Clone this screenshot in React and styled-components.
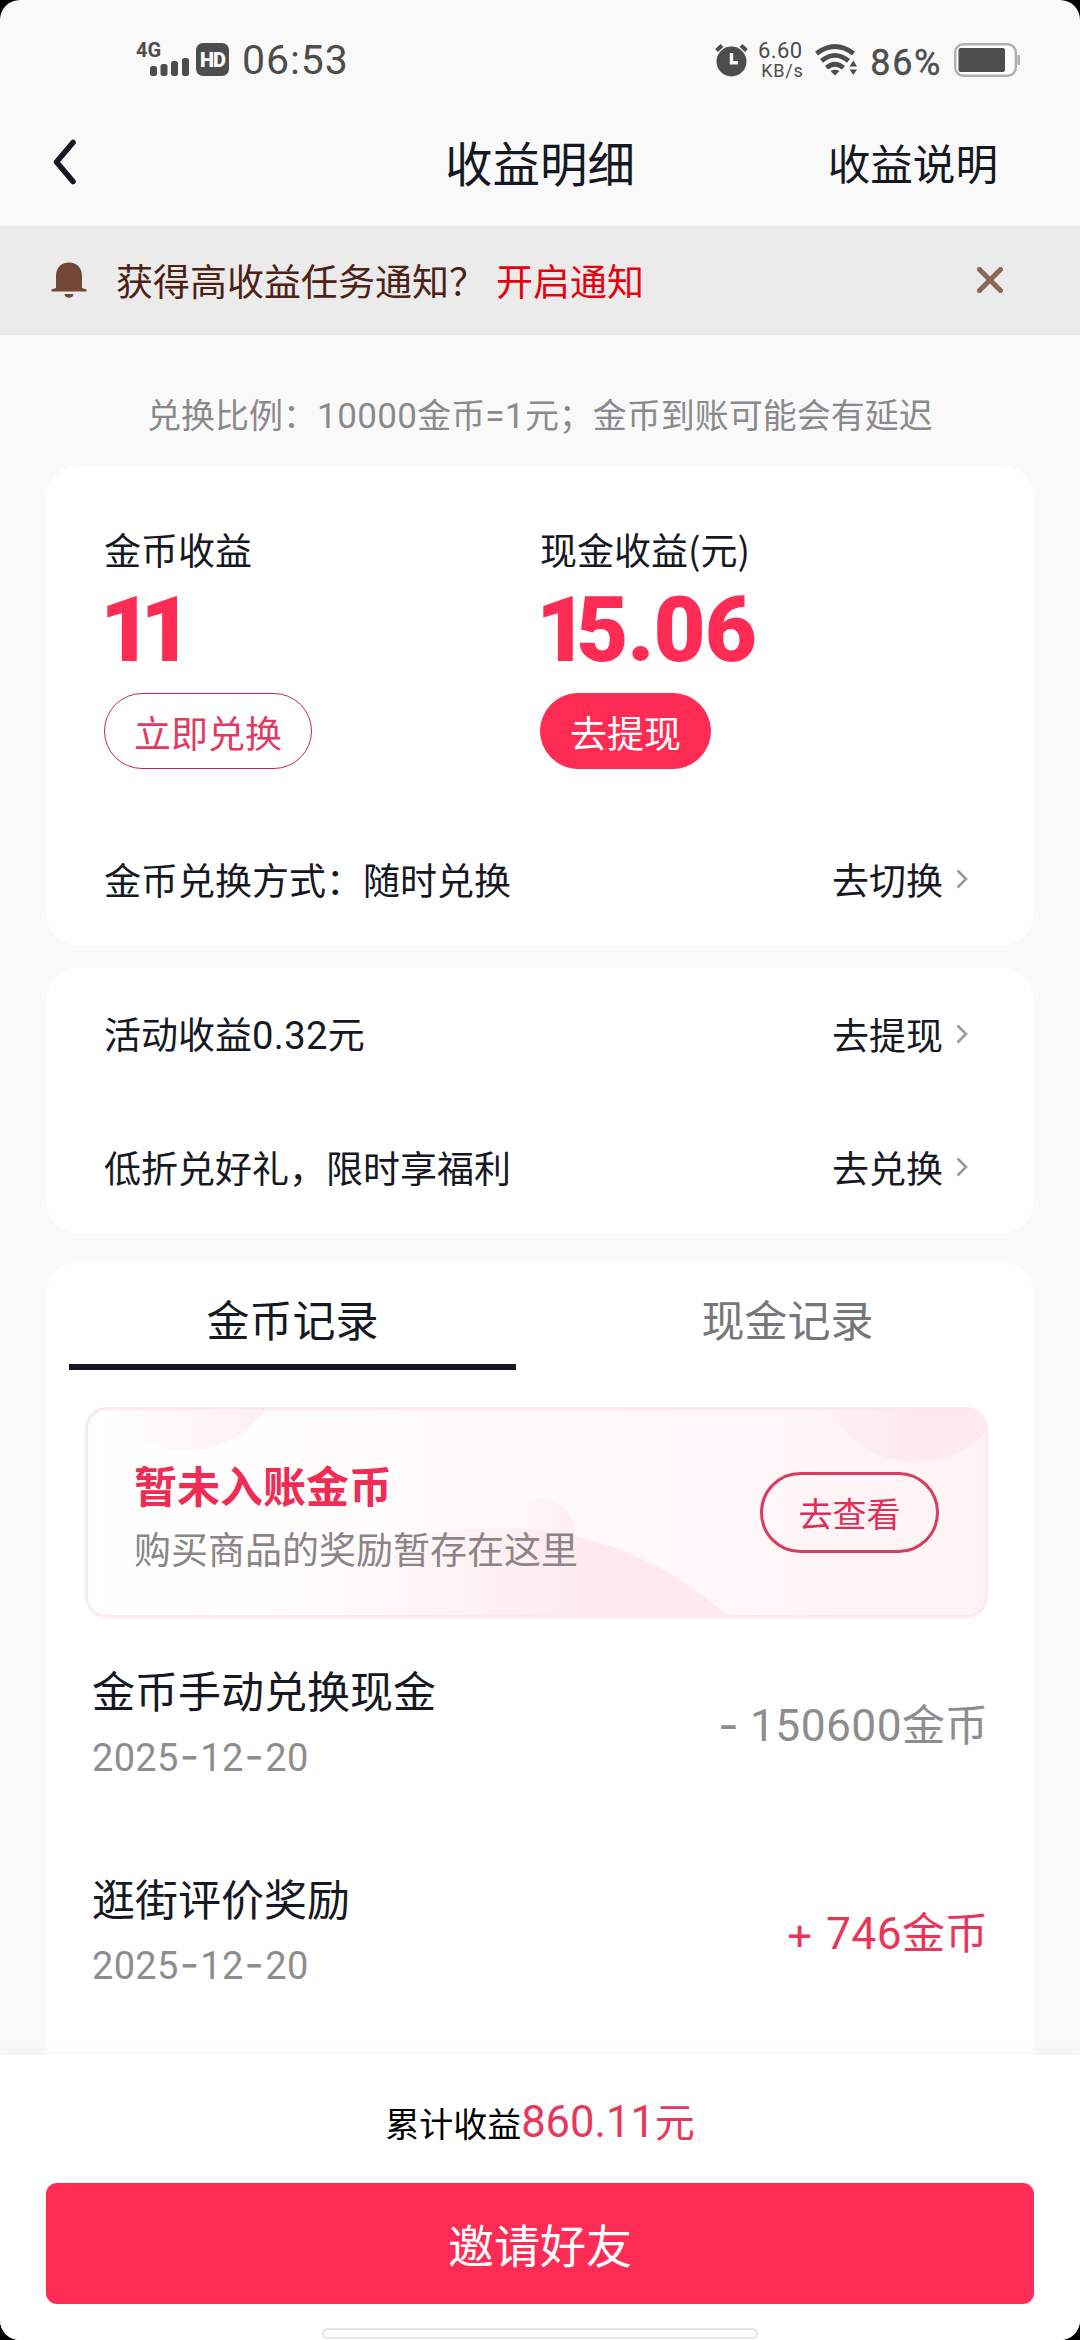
import React, { useState } from 'react';
import styled, { createGlobalStyle } from 'styled-components';

const records = [
    { id: 1, title: '金币手动兑换现金', date: '2025-12-20', sign: '-', amount: '150600' },
    { id: 2, title: '逛街评价奖励', date: '2025-12-20', sign: '+', amount: '746' },
]

const tabs = ['金币记录', '现金记录']

const StatusBar = () => {
    return (
        <StatusWrap>
            <StatusLeft>
                <Network>
                    <p>4G</p>
                    <svg width="39" height="18" viewBox="0 0 39 18" fill="#4d4d4d">
                        <rect x="0" y="8" width="7" height="10" rx="2.5" />
                        <rect x="10.5" y="6" width="7" height="12" rx="2.5" />
                        <rect x="21" y="3" width="7" height="15" rx="2.5" />
                        <rect x="32" y="0" width="7" height="18" rx="2.5" />
                    </svg>
                </Network>
                <HdBadge>HD</HdBadge>
                <Clock>06:53</Clock>
            </StatusLeft>
            <StatusRight>
                <svg width="33" height="34" viewBox="0 0 33 34">
                    <circle cx="16.5" cy="18.5" r="15" fill="#4d4d4d" />
                    <path d="M1.5 7.5 L7 2.5 M31.5 7.5 L26 2.5" stroke="#4d4d4d" strokeWidth="4" />
                    <path d="M16.5 10 V19.8 H23" fill="none" stroke="#f9f9f9" strokeWidth="3.4" />
                </svg>
                <Speed>
                    <b>6.60</b>
                    <span>KB/s</span>
                </Speed>
                <svg width="42" height="32" viewBox="0 0 42 32">
                    <g fill="none" stroke="#4d4d4d" strokeWidth="4.8">
                        <path d="M1.5 9.5 Q20 -4.5 38.5 9.5" />
                        <path d="M6.5 16.8 Q20 6 33.5 16.8" />
                        <path d="M11.5 23.8 Q20 16.5 28.5 23.8" />
                    </g>
                    <path d="M15.5 27 Q20 24.4 24.5 27 L20 31.5 Z" fill="#4d4d4d" />
                    <path d="M38.3 16.5 L42 22.5 H34.6 Z M38.3 31 L42 25.5 H34.6 Z" fill="#4d4d4d" />
                </svg>
                <Percent>86%</Percent>
                <svg width="66" height="34" viewBox="0 0 66 34">
                    <rect x="1.2" y="1.2" width="60.6" height="31.6" rx="8" fill="#fff" stroke="#b0b0b0" strokeWidth="2.4" />
                    <rect x="4.5" y="5" width="46.5" height="24" rx="2" fill="#4d4d4d" />
                    <rect x="63.4" y="12" width="2.6" height="10" rx="1" fill="#b0b0b0" />
                </svg>
            </StatusRight>
        </StatusWrap>
    )
}

const LinkRow = ({ label, action }) => {
    return (
        <LinkRowWrap>
            <p>{label}</p>
            <LinkBtn>
                {action}
                <svg width="12" height="20" viewBox="0 0 12 20">
                    <path d="M1.5 1.5 L10 10 L1.5 18.5" fill="none" stroke="#999" strokeWidth="2.6" />
                </svg>
            </LinkBtn>
        </LinkRowWrap>
    )
}

const PendingBanner = () => {
    return (
        <Banner>
            <BannerArt width="903" height="211" viewBox="0 0 903 211">
                <defs>
                    <linearGradient id="bannerLeft" x1="0" x2="1">
                        <stop offset="0.1" stopColor="#fdeef1" stopOpacity="0" />
                        <stop offset="1" stopColor="#fdeef1" />
                    </linearGradient>
                    <linearGradient id="bannerHill" x1="0" x2="1">
                        <stop offset="0.25" stopColor="#fee9ee" stopOpacity="0" />
                        <stop offset="0.65" stopColor="#fee9ee" />
                    </linearGradient>
                    <linearGradient id="bannerRight" x1="0" x2="1">
                        <stop offset="0.05" stopColor="#fee9ee" stopOpacity="0.4" />
                        <stop offset="0.5" stopColor="#fee9ee" />
                    </linearGradient>
                </defs>
                <circle cx="102" cy="-51" r="95" fill="url(#bannerLeft)" />
                <circle cx="455" cy="126" r="35" fill="url(#bannerLeft)" />
                <circle cx="415" cy="460" r="339" fill="url(#bannerHill)" />
                <circle cx="830" cy="-44" r="99" fill="url(#bannerRight)" />
            </BannerArt>
            <BannerText>
                <h3>暂未入账金币</h3>
                <p>购买商品的奖励暂存在这里</p>
            </BannerText>
            <BannerBtn>去查看</BannerBtn>
        </Banner>
    )
}

const RecordItem = ({ record }) => {
    const [year, month, day] = record.date.split('-')

    return (
        <RecordWrap>
            <div>
                <RecordTitle>{record.title}</RecordTitle>
                <RecordDate>{year}<Dash>-</Dash>{month}<Dash>-</Dash>{day}</RecordDate>
            </div>
            <RecordAmount $income={record.sign === '+'}>
                <Sign>{record.sign}</Sign><Num> {record.amount}</Num>金币
            </RecordAmount>
        </RecordWrap>
    )
}

const App = () => {
    const [active, setActive] = useState(0)

    return (
        <Screen>
            <GlobalStyle />
            <Page>
                <StatusBar />
                <NavBar>
                    <BackBtn>
                        <svg width="24" height="46" viewBox="0 0 24 46">
                            <path d="M21 3.5 L4.5 23 L21 42.5" fill="none" stroke="#161823" strokeWidth="5.6" strokeLinecap="round" strokeLinejoin="round" />
                        </svg>
                    </BackBtn>
                    <h1>收益明细</h1>
                    <NavLink>收益说明</NavLink>
                </NavBar>
                <Notice>
                    <svg width="36" height="36" viewBox="0 0 36 36" fill="#724735">
                        <path d="M5 26 V14 C5 5.5 10.5 0.5 18 0.5 C25.5 0.5 31 5.5 31 14 V26 L35.5 27.5 V29.5 H0.5 V27.5 Z" />
                        <path d="M13.5 32 H22.5 C22.5 37 13.5 37 13.5 32 Z" />
                    </svg>
                    <NoticeText>获得高收益任务通知？</NoticeText>
                    <NoticeLink>开启通知</NoticeLink>
                    <svg width="26" height="26" viewBox="0 0 26 26">
                        <path d="M2.5 2.5 L23.5 23.5 M23.5 2.5 L2.5 23.5" stroke="#8a6759" strokeWidth="5" strokeLinecap="round" />
                    </svg>
                </Notice>
                <Rate>
                    兑换比例：<Num>10000</Num>金币<Num>=1</Num>元；金币到账可能会有延迟
                </Rate>
                <Card>
                    <Balances>
                        <Balance>
                            <p>金币收益</p>
                            <h2><Tight>1</Tight>1</h2>
                            <PillBtn>立即兑换</PillBtn>
                        </Balance>
                        <Balance>
                            <p>现金收益(元)</p>
                            <h2><Tight>1</Tight>5.06</h2>
                            <PillBtn $filled>去提现</PillBtn>
                        </Balance>
                    </Balances>
                    <LinkRow label="金币兑换方式：随时兑换" action="去切换" />
                </Card>
                <Card $top={23}>
                    <LinkRow label={<>活动收益<Num>0.32</Num>元</>} action="去提现" />
                    <LinkRow label="低折兑好礼，限时享福利" action="去兑换" />
                </Card>
                <RecordCard $top={29}>
                    <TabList>
                        {tabs.map((tab, i) => (
                            <Tab key={tab} $active={active === i} onClick={() => setActive(i)}>{tab}</Tab>
                        ))}
                    </TabList>
                    <PendingBanner />
                    <ul>
                        {records.map((record) => (
                            <RecordItem key={record.id} record={record} />
                        ))}
                    </ul>
                </RecordCard>
                <Footer>
                    <Total>
                        累计收益<strong>860.11<i>元</i></strong>
                    </Total>
                    <InviteBtn>邀请好友</InviteBtn>
                    <HomeBar />
                </Footer>
            </Page>
        </Screen>
    )
}

const GlobalStyle = createGlobalStyle`
    *{
        box-sizing:border-box;
        margin:0;
        padding:0;
    }
    body{
        background:#000;
        color:#161823;
        font-family:'Noto Sans CJK SC', sans-serif;
        font-size:37px;
    }
    h1, h2, h3{
        font-weight:400;
    }
    ul{
        list-style:none;
    }
    button{
        border:0;
        background:none;
        color:inherit;
        font:inherit;
    }
    svg{
        display:block;
        flex-shrink:0;
    }
`

const Screen = styled.div`
    width:1080px;
    height:2340px;
    background:#000;
`

const Page = styled.div`
    display:flex;
    flex-direction:column;
    height:100%;
    overflow:hidden;
    background:#f9f9f9;
    border-radius:20px;
`

const Num = styled.span`
    font-family:Roboto, sans-serif;
    font-size:1.03em;
    letter-spacing:0.01em;
`

const StatusWrap = styled.header`
    display:flex;
    justify-content:space-between;
    height:92px;
    padding:42px 60px 0 136px;
    color:#4d4d4d;
    font-family:Roboto, sans-serif;
`

const StatusLeft = styled.div`
    display:flex;
    align-items:flex-start;
`

const Network = styled.div`
    width:53px;
    height:34px;
    p{
        height:16px;
        font-size:20px;
        line-height:16px;
        font-weight:700;
    }
    svg{
        margin-left:14px;
    }
`

const HdBadge = styled.div`
    width:33px;
    height:33px;
    margin:1px 0 0 7px;
    border-radius:7px;
    background:#4d4d4d;
    color:#f9f9f9;
    font-size:20px;
    line-height:34px;
    font-weight:900;
    letter-spacing:-1px;
    text-align:center;
`

const Clock = styled.p`
    margin-left:13px;
    font-size:41px;
    line-height:36px;
    letter-spacing:0.9px;
`

const StatusRight = styled.div`
    display:flex;
    align-items:center;
    height:36px;
`

const Speed = styled.div`
    display:flex;
    flex-direction:column;
    align-items:center;
    width:50px;
    margin:1px 10px 0 7px;
    b{
        font-size:22px;
        line-height:20px;
        font-weight:400;
        letter-spacing:0.4px;
    }
    span{
        padding-left:4px;
        font-size:18px;
        line-height:19px;
        letter-spacing:0.7px;
    }
`

const Percent = styled.p`
    margin:5px 12px 0 13px;
    font-size:36px;
    line-height:36px;
    letter-spacing:1.6px;
    -webkit-text-stroke:0.4px #4d4d4d;
`

const NavBar = styled.nav`
    display:grid;
    grid-template-columns:1fr auto 1fr;
    align-items:center;
    height:134px;
    padding:8px 82px 2px 52px;
    h1{
        margin-left:30px;
        font-size:47.5px;
        line-height:60px;
    }
`

const BackBtn = styled.button`
    justify-self:start;
`

const NavLink = styled.button`
    justify-self:end;
    margin-top:1px;
    font-size:42.6px;
    line-height:60px;
`

const Notice = styled.section`
    display:flex;
    align-items:center;
    height:109px;
    padding:0 77px 0 51px;
    background:#ebebeb;
    line-height:50px;
    & > svg:last-child{
        margin-left:auto;
    }
`

const NoticeText = styled.p`
    margin-left:29px;
    color:#4d2113;
`

const NoticeLink = styled.button`
    margin-left:10px;
    color:#e8000f;
`

const Rate = styled.p`
    height:131px;
    padding-top:54px;
    color:#8a8a8c;
    font-size:34px;
    line-height:50px;
    text-align:center;
    white-space:nowrap;
`

const Card = styled.section`
    flex-shrink:0;
    margin:${({ $top }) => $top || 0}px 46px 0;
    border-radius:32px;
    background:#fff;
`

const Balances = styled.div`
    display:grid;
    grid-template-columns:436px 1fr;
    height:347px;
    padding:57px 58px 0;
`

const Balance = styled.div`
    p{
        line-height:52px;
    }
    h2{
        height:118px;
        margin-left:-4px;
        padding-top:3px;
        color:#fe2c55;
        font-family:Roboto, sans-serif;
        font-size:90px;
        line-height:106px;
        font-weight:900;
        letter-spacing:-1px;
    }
`

// pulls the narrow 1 closer to its neighbour
const Tight = styled.span`
    letter-spacing:-12px;
`

const PillBtn = styled.button`
    height:76px;
    padding:2px 29px 0;
    border:1px solid ${({ $filled }) => ($filled ? '#fe2c55' : '#c92450')};
    border-radius:38px;
    background:${({ $filled }) => ($filled ? '#fe2c55' : 'transparent')};
    color:${({ $filled }) => ($filled ? '#fff' : '#e53a60')};
    line-height:70px;
`

const LinkRowWrap = styled.div`
    display:flex;
    justify-content:space-between;
    align-items:center;
    height:132.5px;
    padding:0 66px 0 58px;
    line-height:52px;
`

const LinkBtn = styled.button`
    display:flex;
    align-items:center;
    gap:13px;
    line-height:52px;
`

const RecordCard = styled(Card)`
    height:793px;
    border-radius:32px 32px 0 0;
`

const TabList = styled.div`
    display:flex;
    justify-content:space-between;
    height:108px;
    margin:0 23px 37px;
`

const Tab = styled.button`
    width:447px;
    padding-top:11px;
    border-bottom:6px solid ${({ $active }) => ($active ? '#161823' : 'transparent')};
    color:${({ $active }) => ($active ? '#161823' : '#77777b')};
    font-size:43px;
    line-height:91px;
`

const Banner = styled.div`
    position:relative;
    display:flex;
    justify-content:space-between;
    align-items:center;
    width:903px;
    height:211px;
    margin-left:39px;
    padding:0 46px 0 46px;
    overflow:hidden;
    border:3px solid #fde8ed;
    border-radius:22px;
    background:linear-gradient(90deg, #fff, #fffafa 45%, #fff3f5);
`

// sits behind the banner text
const BannerArt = styled.svg`
    position:absolute;
    top:-3px;
    left:-3px;
`

const BannerText = styled.div`
    position:relative;
    padding-top:6px;
    h3{
        color:#f02b54;
        font-size:43px;
        line-height:64px;
        font-weight:700;
    }
    p{
        color:#8b8587;
        line-height:64px;
    }
`

const BannerBtn = styled.button`
    position:relative;
    width:179px;
    height:81px;
    border:3px solid #d93c62;
    border-radius:41px;
    color:#e22d58;
    font-size:34px;
    line-height:75px;
`

const RecordWrap = styled.li`
    display:flex;
    justify-content:space-between;
    align-items:center;
    height:208px;
    padding:4px 46px 0 46px;
`

const RecordTitle = styled.p`
    margin-top:3px;
    font-size:43px;
    line-height:64px;
`

const RecordDate = styled.p`
    color:#8d8d90;
    font-family:Roboto, sans-serif;
    font-size:38px;
    line-height:74px;
    letter-spacing:0.3px;
`

const Dash = styled.span`
    margin:0 1px;
    font-family:Inter, sans-serif;
    font-size:42px;
    line-height:1;
`

const Sign = styled.span`
    font-family:Inter, sans-serif;
    font-size:45px;
    line-height:1;
`

const RecordAmount = styled.p`
    color:${({ $income }) => ($income ? '#ea355b' : '#8d8d90')};
    font-size:43px;
    line-height:66px;
`

const Footer = styled.footer`
    display:flex;
    flex-direction:column;
    align-items:center;
    flex-shrink:0;
    height:285px;
    padding:0 46px;
    background:#fff;
    box-shadow:0 0 24px rgba(0, 0, 0, 0.04);
    z-index:1;
`

const Total = styled.p`
    height:128px;
    padding-top:32px;
    color:#000;
    font-size:34px;
    line-height:66px;
    strong{
        color:#e8375c;
        font-family:Roboto, sans-serif;
        font-size:43.5px;
        font-weight:400;
    }
    i{
        font-family:'Noto Sans CJK SC', sans-serif;
        font-size:40px;
        font-style:normal;
    }
`

const InviteBtn = styled.button`
    width:100%;
    height:121px;
    border-radius:11px;
    background:#fe2c55;
    color:#fff;
    font-size:46px;
    line-height:121px;
`

const HomeBar = styled.div`
    width:436px;
    height:11px;
    margin-top:24px;
    border:2px solid #e6e6e6;
    border-radius:6px;
`

export default App
